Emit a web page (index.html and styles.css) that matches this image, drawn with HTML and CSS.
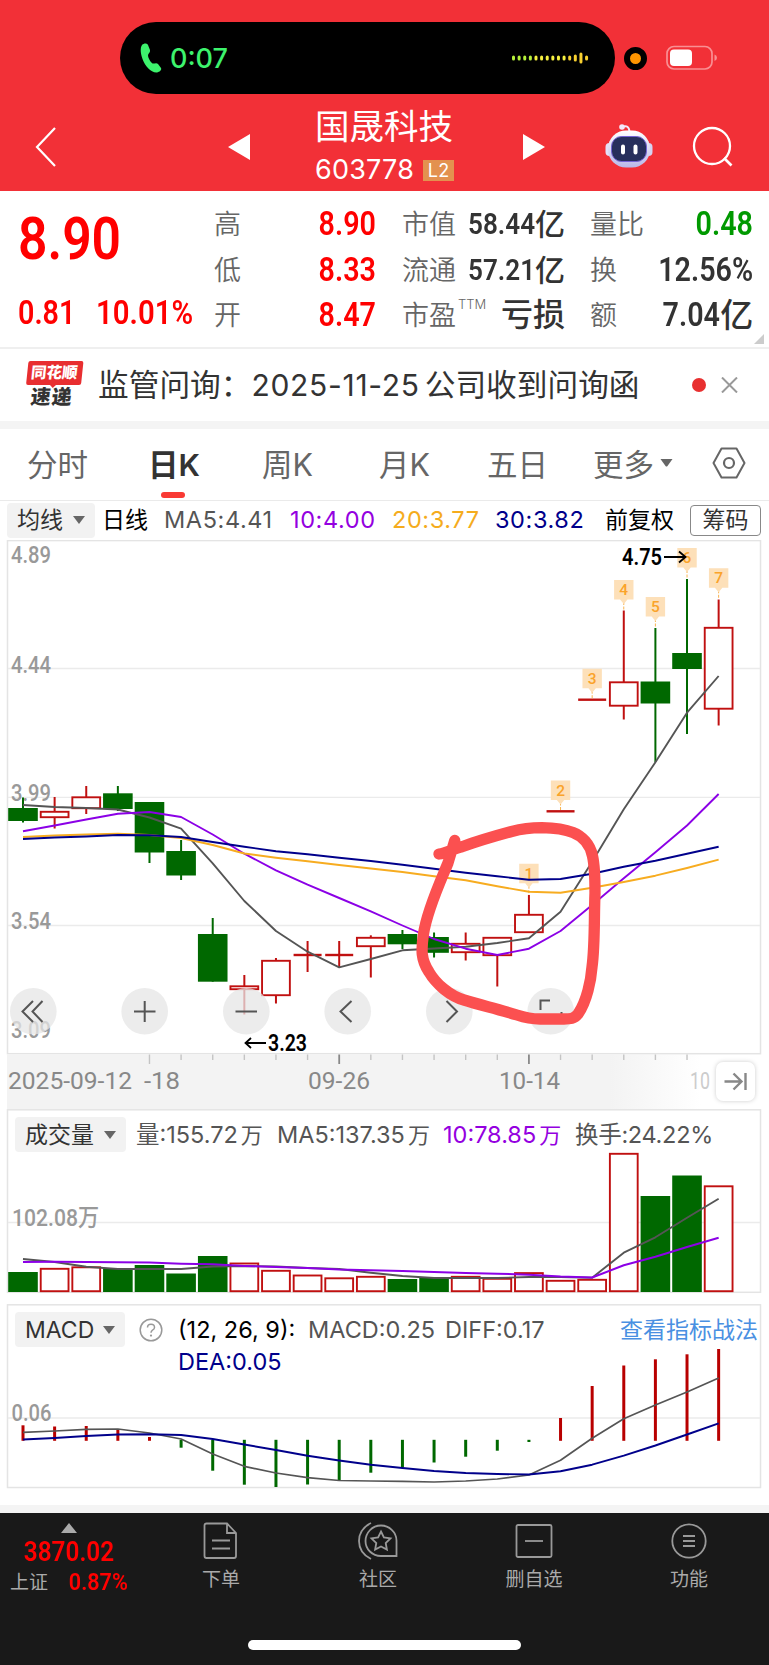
FILE: index.html
```html
<!DOCTYPE html>
<html lang="zh-CN">
<head>
    <meta charset="UTF-8">
    <meta name="viewport" content="width=device-width, initial-scale=1.0">
    <title>国晟科技 603778</title>
    <link rel="stylesheet" href="styles.css">
</head>
<body>
    <header class="top">
        <div class="status">
            <div class="island">
                <svg class="phone" width="22" height="30" viewBox="0 0 22 30"><path d="M2 2C4 0 7 0 8 2L10 7C10.500 9 8.500 10.500 8 12C8 15 10.500 19 12.500 20.500C14 21 16.500 19.500 18 21L21 25C22 27 19.500 29 17 29.500C11 30 5 23 2.500 16C0.500 10 0 5 2 2Z" fill="#3df36d"/></svg>
                <span class="call-time">0:07</span>
                <svg class="wave" width="77" height="16" viewBox="0 0 77 16" id="wave"></svg>
            </div>
            <div class="mic"></div>
            <svg class="battery" width="52" height="26" viewBox="0 0 52 26">
                <rect x="1" y="1.500" width="45" height="22.500" rx="7" fill="none" stroke="#f98f93" stroke-width="1.700"/>
                <rect x="4" y="4.500" width="22" height="16.500" rx="4" fill="#fff"/>
                <path d="M48.500 9.500Q51 10.500 51 12.800T48.500 16Z" fill="#f98f93"/>
            </svg>
        </div>
        <nav class="titlebar">
            <svg class="back" width="22" height="40" viewBox="0 0 22 40"><path d="M20 1L2 20L20 39" fill="none" stroke="#fff" stroke-width="2.200"/></svg>
            <svg class="prev" width="22" height="26" viewBox="0 0 22 26"><path d="M22 0V26L0 13Z" fill="#fff"/></svg>
            <div class="stock">
                <div class="name">国晟科技</div>
                <div class="code"><span>603778</span><b>L2</b></div>
            </div>
            <svg class="next" width="22" height="26" viewBox="0 0 22 26"><path d="M0 0V26L22 13Z" fill="#fff"/></svg>
            <svg class="robot" width="48" height="44" viewBox="0 0 48 44">
                <defs>
                    <linearGradient id="shell" x1="0" y1="0" x2="0" y2="1"><stop offset="0" stop-color="#fff"/><stop offset="1" stop-color="#b9b8e8"/></linearGradient>
                </defs>
                <path d="M17 3Q24 0 24.500 8" fill="none" stroke="#f3e9fb" stroke-width="2"/>
                <circle cx="17" cy="3" r="2.800" fill="#f3e9fb"/>
                <rect x="0.500" y="19" width="8" height="13" rx="4" fill="#e4e0f8"/>
                <rect x="39.500" y="19" width="8" height="13" rx="4" fill="#d5d2f2"/>
                <rect x="3" y="6.500" width="42" height="37" rx="18" fill="url(#shell)"/>
                <rect x="6.500" y="12.500" width="35" height="25" rx="10" fill="#272f5c" stroke="#7262d5" stroke-width="1"/>
                <path d="M18 22.500V28.500M30.500 22.500V28.500" stroke="#fff" stroke-width="4" stroke-linecap="round"/>
            </svg>
            <svg class="search" width="42" height="42" viewBox="0 0 42 42"><circle cx="20" cy="20" r="18" fill="none" stroke="#fff" stroke-width="2.300"/><path d="M32 32L39.500 39.500" stroke="#fff" stroke-width="2.600"/></svg>
        </nav>
    </header>

    <section class="quote">
        <div class="price">
            <div class="last"><span class="din">8.90</span></div>
            <div class="change"><span class="din">0.81</span><span class="din">10.01%</span></div>
        </div>
        <dl class="c1">
            <dt>高</dt><dd class="red"><span class="din">8.90</span></dd>
            <dt>低</dt><dd class="red"><span class="din">8.33</span></dd>
            <dt>开</dt><dd class="red"><span class="din">8.47</span></dd>
        </dl>
        <dl class="c2">
            <dt>市值</dt><dd class="small"><span class="din">58.44</span>亿</dd>
            <dt>流通</dt><dd class="small"><span class="din">57.21</span>亿</dd>
            <dt>市盈<sup>TTM</sup></dt><dd class="loss">亏损</dd>
        </dl>
        <dl class="c3">
            <dt>量比</dt><dd class="green"><span class="din">0.48</span></dd>
            <dt>换</dt><dd><span class="din">12.56%</span></dd>
            <dt>额</dt><dd><span class="din">7.04</span>亿</dd>
        </dl>
        <i class="corner"></i>
    </section>

    <section class="notice">
        <div class="logo"><span class="logo-top">同花顺</span><span class="logo-bottom">速递</span></div>
        <p>监管问询：<span class="date">2025-11-25</span>公司收到问询函</p>
        <i class="dot"></i>
        <svg width="17" height="16" viewBox="0 0 17 16"><path d="M1 0.500L16 15.500M16 0.500L1 15.500" stroke="#999" stroke-width="2"/></svg>
    </section>

    <nav class="tabs">
        <a class="t1">分时</a><a class="t2 active">日K</a><a class="t3">周K</a><a class="t4">月K</a><a class="t5">五日</a>
        <a class="more">更多<svg width="13" height="8" viewBox="0 0 13 8"><path d="M0.500 0H12.500L7.500 7Q6.500 8 5.500 7Z" fill="#666"/></svg></a>
        <svg class="setting" width="34" height="32" viewBox="0 0 34 32"><path d="M9.500 1.500H24.500L32.500 16L24.500 30.500H9.500L1.500 16Z" fill="none" stroke="#666" stroke-width="2" stroke-linejoin="round"/><circle cx="17" cy="16" r="5" fill="none" stroke="#666" stroke-width="2.200"/></svg>
    </nav>

    <div class="legend ma">
        <button class="pick">均线<i></i></button>
        <span class="day">日线</span>
        <span class="ma5">MA5:4.41</span>
        <span class="ma10">10:4.00</span>
        <span class="ma20">20:3.77</span>
        <span class="ma30">30:3.82</span>
        <span class="fq">前复权</span>
        <button class="chip">筹码</button>
    </div>

    <main class="charts">
        <div class="axis-bg"></div>
        <div class="legend vol">
            <button class="pick">成交量<i></i></button>
            <span class="v1">量:155.72<em>万</em></span>
            <span class="v2">MA5:137.35<em>万</em></span>
            <span class="v3">10:78.85<em>万</em></span>
            <span class="v4">换手:24.22%</span>
        </div>
        <div class="legend macd">
            <button class="pick">MACD<i></i></button>
            <svg class="help" width="24" height="24" viewBox="0 0 24 24"><circle cx="12" cy="12" r="10.800" fill="none" stroke="#999" stroke-width="1.500"/><path d="M8.500 9.500Q8.500 6.300 12 6.300T15.500 9.400Q15.500 11 13.500 12.200Q12 13.200 12 14.800" fill="none" stroke="#999" stroke-width="1.500"/><circle cx="12" cy="17.600" r="1.100" fill="#999"/></svg>
            <span class="m1">(12, 26, 9):</span>
            <span class="m2">MACD:0.25</span>
            <span class="m3">DIFF:0.17</span>
            <a class="tips">查看指标战法</a>
            <span class="dea">DEA:0.05</span>
        </div>
        <svg id="chart" width="769" height="964" viewBox="0 540 769 964"></svg>
    </main>

    <footer class="bottom">
        <div class="index">
            <i></i>
            <strong class="din">3870.02</strong>
            <div><span>上证</span><b class="din">0.87%</b></div>
        </div>
        <div class="item i1">
            <svg width="36" height="38" viewBox="0 0 36 38"><path d="M3.500 1.500H24L33 11V34Q33 36 31 36H3.500Q1.500 36 1.500 34V3.500Q1.500 1.500 3.500 1.500ZM24 1.500V11H33M9 18.500H27M9 26.500H27"/></svg>
            <span>下单</span>
        </div>
        <div class="item i2">
            <svg width="40" height="38" viewBox="0 0 40 38"><path d="M13 1Q1 7 1 19T13 37M23 3.500C31 3.500 38.500 10 38.500 18.500V34H23C14 34 7.500 27 7.500 19S14 3.500 23 3.500Z"/><path d="M23 9.500L25.900 15.500L32.500 16.400L27.700 21L28.900 27.600L23 24.500L17.100 27.600L18.300 21L13.500 16.400L20.100 15.500Z"/></svg>
            <span>社区</span>
        </div>
        <div class="item i3">
            <svg width="38" height="38" viewBox="0 0 38 38"><rect x="1.500" y="3" width="35" height="32" rx="1.500"/><path d="M10 19H28"/></svg>
            <span>删自选</span>
        </div>
        <div class="item i4">
            <svg width="38" height="38" viewBox="0 0 38 38"><circle cx="19" cy="19" r="16.700"/><path d="M13 14H25M13 19H25M13 24H25"/></svg>
            <span>功能</span>
        </div>
        <div class="home"></div>
    </footer>
    <script src="chart.js"></script>
</body>
</html>
```
FILE: styles.css
```css
* {
    box-sizing: border-box;
}
body {
    margin: 0;
    width: 769px;
    height: 1665px;
    background: #fff;
    color: #333;
    font-family: Inter, "Noto Sans CJK SC", sans-serif;
    white-space: nowrap;
    overflow: hidden;
}
svg {
    display: block;
    flex: none;
}
button {
    border: none;
    margin: 0;
    padding: 0;
    font: inherit;
    color: #333;
}
p, dl, dd {
    margin: 0;
}
.din {
    display: inline-block;
    font-family: Roboto, sans-serif;
    font-weight: 600;
    transform: scaleX(0.87);
    transform-origin: right center;
}
/* header */
.top {
    height: 191px;
    background: #f23037;
    color: #fff;
}
.status {
    display: flex;
    padding: 22px 0 0 120px;
    height: 94px;
}
.island {
    width: 495px;
    height: 72px;
    border-radius: 36px;
    background: #000;
    display: flex;
    align-items: center;
    padding: 0 26px 0 20px;
}
.call-time {
    margin-left: 8px;
    font-size: 27px;
    font-weight: 500;
    color: #3df36d;
}
.wave {
    margin-left: auto;
}
.mic {
    width: 23px;
    height: 23px;
    border-radius: 50%;
    background: #ff9500;
    border: 6px solid #000;
    margin: 25px 0 0 9px;
}
.battery {
    margin: 23px 0 0 19px;
}
.titlebar {
    display: flex;
    align-items: center;
    height: 97px;
    padding-left: 35px;
}
.prev {
    margin-left: 171px;
    margin-top: 9px;
}
.back {
    margin-top: 9px;
}
.stock {
    margin-left: 65px;
    width: 142px;
}
.name {
    font-size: 34.500px;
    line-height: 42px;
    margin-top: 7px;
}
.code {
    display: flex;
    align-items: center;
    font-size: 27px;
    letter-spacing: 0.200px;
    line-height: 32px;
    margin-top: 6px;
}
.code b {
    width: 31px;
    height: 21px;
    margin-left: 9px;
    background: #e3914f;
    font-size: 18px;
    font-weight: 400;
    line-height: 21px;
    text-align: center;
}
.next {
    margin: 9px 0 0 66px;
}
.robot {
    margin: 7px 0 0 60px;
}
.search {
    margin: 9px 0 0 39px;
}
/* quote */
.quote {
    position: relative;
    display: flex;
    height: 158px;
    border-bottom: 2px solid #efefef;
    padding-top: 10px;
}
.price {
    width: 214px;
    padding-left: 18px;
    color: #f00;
}
.price .din {
    transform-origin: left center;
}
.last {
    font-size: 60px;
    line-height: 72px;
    height: 88px;
}
.last .din {
    transform: scaleX(0.86);
}
.change {
    display: flex;
    font-size: 33px;
    line-height: 48px;
}
.change span + span {
    margin-left: 12px;
    transform: scaleX(0.89);
}
.quote dl {
    display: grid;
    grid-template-columns: 54px 1fr;
    grid-auto-rows: 45.500px;
    font-size: 27px;
    line-height: 48px;
}
.quote dt {
    color: #666;
    font-weight: 350;
}
.quote dd {
    font-size: 33px;
    line-height: 46px;
    height: 46px;
    font-weight: 500;
    display: flex;
    justify-content: flex-end;
    align-items: center;
}
.quote dd.small {
    font-size: 30px;
}
.quote dd.loss {
    font-size: 32px;
}
.quote sup {
    font-size: 13px;
    line-height: 1;
    vertical-align: 16px;
    margin-left: 2px;
    display: inline-block;
}
.c1 { width: 162px; }
.c2 { width: 163px; margin-left: 26px; }
.c3 { width: 163px; margin-left: 25px; }
.quote .red { color: #f00; }
.quote .green { color: #090; }
.corner {
    position: absolute;
    right: 5px;
    bottom: 3px;
    border-left: 10px solid transparent;
    border-bottom: 10px solid #ccc;
}
/* notice */
.notice {
    display: flex;
    align-items: center;
    height: 80px;
    border-bottom: 8px solid #f4f4f4;
    padding-left: 24px;
}
.logo {
    width: 58px;
    height: 48px;
    display: flex;
    flex-direction: column;
    align-items: center;
    font-weight: 900;
    transform: skewX(-6deg);
}
.logo-top {
    position: relative;
    width: 55px;
    height: 24px;
    border-radius: 2px;
    background: #e82e30;
    color: #fff;
    font-size: 15.500px;
    line-height: 24px;
    text-align: center;
}
.logo-top::after {
    content: "";
    position: absolute;
    left: 23px;
    top: 23px;
    border: 4px solid transparent;
    border-top-color: #e82e30;
    border-bottom: 0;
}
.logo-bottom {
    font-size: 20px;
    line-height: 25px;
    letter-spacing: 1px;
}
.notice p {
    width: 600px;
    margin-left: 16px;
    font-size: 30.700px;
    line-height: 40px;
}
.date {
    font-size: 30px;
    letter-spacing: 0.700px;
    margin-right: 5px;
}
.notice .dot {
    width: 14px;
    height: 14px;
    border-radius: 50%;
    background: #e83030;
    margin: 0 15px 0 -6px;
}
/* tabs */
.tabs {
    display: flex;
    align-items: center;
    height: 72px;
    padding: 0 0 3px 27px;
    border-bottom: 1px solid #eaeaea;
    font-size: 30.500px;
    color: #666;
}
.tabs a {
    position: relative;
}
.tabs .t1 { width: 121px; }
.tabs .t2 { width: 114px; }
.tabs .t3 { width: 117px; }
.tabs .t4 { width: 108px; }
.tabs .t5 { width: 106px; }
.tabs .active {
    color: #333;
    font-weight: 600;
}
.tabs .active::after {
    content: "";
    position: absolute;
    left: 13px;
    top: 51px;
    width: 24px;
    height: 6px;
    border-radius: 3px;
    background: #f93a34;
}
.tabs .more {
    display: flex;
    align-items: center;
    gap: 6px;
    width: 119px;
}
/* legends */
.legend {
    display: flex;
    align-items: center;
    font-size: 23.500px;
    line-height: 30px;
    color: #555;
}
.legend em {
    font-style: normal;
    font-size: 22px;
    margin-left: 3px;
}
.pick {
    display: flex;
    align-items: center;
    justify-content: space-between;
    flex: none;
    height: 35px;
    padding: 0 10px;
    border-radius: 4px;
    background: #f2f2f2;
    font-size: 23px;
}
.pick i {
    border: 6px solid transparent;
    border-top: 8px solid #666;
    border-bottom: 0;
}
.ma {
    height: 40px;
    padding: 0 0 2px 7px;
    letter-spacing: 0.600px;
}
.ma .pick { width: 88px; letter-spacing: 0; }
.day { width: 62px; margin-left: 7px; color: #000; font-size: 23px; letter-spacing: 0; }
.ma5 { width: 126px; }
.ma10 { width: 102px; color: #9400e0; }
.ma20 { width: 103px; color: #f5ac1d; }
.ma30 { width: 110px; color: #00008b; }
.fq { width: 85px; color: #000; font-size: 23px; letter-spacing: 0; }
.chip {
    width: 71px;
    height: 31px;
    border: 1.500px solid #888;
    border-radius: 4px;
    background: #fff;
    font-size: 23px;
    letter-spacing: 0;
    line-height: 27px;
}
/* charts */
.charts {
    position: relative;
    height: 972px;
    border-bottom: 8px solid #f4f4f4;
}
.axis-bg {
    position: absolute;
    left: 7px;
    top: 514px;
    width: 754px;
    height: 55px;
    background: linear-gradient(90deg, #f3f3f3 0, #f3f3f3 80%, #fff 92%);
}
.vol {
    position: absolute;
    left: 15px;
    top: 576px;
}
.vol .pick { width: 111px; }
.v1 { width: 141px; margin-left: 10px; }
.v2 { width: 166px; }
.v3 { width: 132px; color: #9400e0; }
.v4 { letter-spacing: -0.300px; }
.macd {
    position: absolute;
    left: 15px;
    top: 771px;
}
.macd .pick { width: 110px; }
.help { margin: 0 15px 0 14px; }
.m1 { width: 130px; color: #000; }
.m2 { width: 137px; }
.m3 { width: 175px; }
.tips { color: #4a90e2; font-size: 23px; }
.dea {
    position: absolute;
    left: 163px;
    top: 35px;
    color: #00008b;
}
#chart {
    position: absolute;
    left: 0;
    top: -1px;
}
#chart text {
    font-family: Roboto, "Noto Sans CJK SC", sans-serif;
}
/* bottom bar */
.bottom {
    position: relative;
    display: flex;
    height: 153px;
    background: #191919;
    color: #aaa;
    font-size: 19px;
}
.index {
    width: 138px;
    display: flex;
    flex-direction: column;
    align-items: center;
    color: #f00;
}
.index i {
    border: 8.500px solid transparent;
    border-bottom: 10px solid #aaa;
    border-top: 0;
    margin-top: 10px;
}
.index strong {
    font-size: 28px;
    line-height: 34px;
    margin-top: 2px;
    transform-origin: center;
}
.index div {
    display: flex;
    align-items: center;
    width: 128px;
    justify-content: space-between;
    align-self: flex-start;
    padding-left: 10px;
    color: #aaa;
    line-height: 28px;
}
.index b {
    font-size: 23px;
    color: #f00;
    transform: scaleX(0.94);
}
.item {
    width: 80px;
    display: flex;
    flex-direction: column;
    align-items: center;
    padding-top: 9px;
}
.item svg {
    fill: none;
    stroke: #999;
    stroke-width: 1.800;
}
.item span {
    margin-top: 6px;
    line-height: 28px;
}
.i1 { margin-left: 43px; }
.i2 { margin-left: 77px; }
.i3 { margin-left: 76px; }
.i4 { margin-left: 75px; }
.home {
    position: absolute;
    left: 248px;
    top: 127px;
    width: 273px;
    height: 10px;
    border-radius: 5px;
    background: #fff;
}
```
FILE: chart.js
```js
const svg = document.getElementById('chart');
const RED = '#c01010', GREEN = '#006800';
const W = 29.6;
let out = '';

// x centre of the n-th trading day
const cx = n => 23 + n * 31.62;

function line(x1, y1, x2, y2, color, w, extra = '') {
    out += `<line x1="${x1}" y1="${y1}" x2="${x2}" y2="${y2}" stroke="${color}" stroke-width="${w}" ${extra}/>`;
}
function bar(n, top, bottom, up) {
    const x = cx(n) - W / 2;
    if (up) {
        out += `<rect x="${x + 0.9}" y="${top + 0.8}" width="${W - 1.8}" height="${bottom - top - 1.6}" fill="#fff" stroke="${RED}" stroke-width="1.9"/>`;
    } else {
        out += `<rect x="${x}" y="${top}" width="${W}" height="${bottom - top}" fill="${GREEN}"/>`;
    }
}
function curve(ys, color, w = 1.9) {
    const pts = ys.map((y, n) => `${cx(n)},${y}`).join(' ');
    out += `<polyline points="${pts}" fill="none" stroke="${color}" stroke-width="${w}" stroke-linejoin="round"/>`;
}
function text(x, y, str, len, color = '#999', size = 24, weight = 500) {
    out += `<text x="${x}" y="${y}" fill="${color}" font-size="${size}" font-weight="${weight}" textLength="${len}" lengthAdjust="spacingAndGlyphs">${str}</text>`;
}
function frame(top, bottom) {
    out += `<rect x="7.5" y="${top}" width="753" height="${bottom - top}" fill="none" stroke="#e4e4e4" stroke-width="1.5"/>`;
}

frame(540.6, 1053.7);
[668.5, 797.3, 925.5].forEach(y => line(8, y, 760, y, '#ebebeb', 1.3));
frame(1109.8, 1292.3);
line(8, 1222.5, 760, 1222.5, '#ebebeb', 1.3);
frame(1304.8, 1487.5);
line(8, 1418, 760, 1418, '#ebebeb', 1.3);

text(11, 563, '4.89', 40);
text(11, 673, '4.44', 40);
text(11, 800.5, '3.99', 40);
text(11, 929, '3.54', 40);
text(11, 1038, '3.09', 40);
text(12, 1226, '102.08万', 87, '#999', 23.5);
text(11.5, 1421, '0.06', 40);

// [up, high, top, bottom, low]
const candles = [
    [0, 797.5, 808, 821, 822.5], [1, 797, 811, 818, 828.5], [1, 786, 796.5, 809, 814],
    [0, 786, 793.3, 809, 811], [0, 802, 802, 852.5, 863], [0, 840, 851, 875.5, 880],
    [0, 918, 934, 981.7, 981.7], [1, 975, 985.5, 990, 1014.5], [1, 958, 960, 996, 1003.5],
    [1, 941, 955, 955, 972], [1, 941, 955, 955, 967], [1, 935.3, 937, 947, 977.5],
    [0, 930, 934, 944.3, 949], [0, 932.5, 937, 952.8, 957.5], [1, 932.5, 943, 953, 960.5],
    [1, 937, 937, 956, 986.5], [1, 895, 914, 933, 933], [1, 811.3, 811.3, 811.3, 811.3],
    [1, 699.7, 699.7, 699.7, 699.7], [1, 610.5, 681.5, 706.5, 719.5], [0, 628, 681.5, 703.5, 762],
    [0, 579, 653, 669, 734], [1, 599.5, 627, 709.5, 725.5]
];
candles.forEach(([up, high, top, bottom, low], n) => {
    const color = up ? RED : GREEN;
    line(cx(n), high, cx(n), low, color, 2);
    if (top === bottom) {
        line(cx(n) - 14, top, cx(n) + 14, top, RED, 2.4);
    } else {
        bar(n, top, bottom, up);
    }
});

// signal tags over the last seven candles
[[16, 863.7, 895], [17, 780.5, 811], [18, 668.7, 699], [19, 580, 610], [20, 597, 628], [21, 548, 579], [22, 568.3, 599]].forEach(([n, y, end], k) => {
    const x = cx(n);
    line(x, y + 22, x, end, '#f9b350', 1, 'stroke-dasharray="3 1.5"');
    out += `<path d="M${x - 9.7} ${y}h19.4v19.500h-6l-3.700 4.500l-3.700 -4.500h-6z" fill="#fde0b9"/>`;
    out += `<text x="${x}" y="${y + 15}" font-size="15.500" font-weight="500" fill="#faa32a" text-anchor="middle">${k + 1}</text>`;
});

curve([805, 807, 808, 809.5, 817.5, 828.7, 863.3, 901, 931, 951.7, 967.3, 959, 950.3, 948.5, 946.7, 943, 938.3, 911.7, 861.7, 809.3, 762.3, 712.7, 676], '#555');
curve([831.3, 825.5, 819.5, 813.7, 812, 817, 834.5, 853.7, 870.3, 884.7, 898, 911.3, 925.5, 939, 948.7, 955, 948.7, 931, 905, 878.3, 852.3, 825.5, 794], '#8b00e6');
curve([837, 835.5, 834.5, 833.7, 835, 838, 845, 853.5, 857.7, 861.3, 865, 868.5, 872, 876.3, 880.3, 886.3, 891.7, 892.7, 887.7, 882, 875.7, 868, 859.7], '#f7ac20');
curve([839, 837.5, 836.5, 835, 835.3, 837, 842, 846.7, 851.3, 854.3, 857.7, 861, 864.7, 868.7, 872.7, 876.3, 879.7, 879, 873.7, 866.7, 860.7, 853.7, 846.7], '#00008b');

text(622, 565, '4.75', 40, '#000', 24, 600);
out += '<path d="M664 557H685M679 551.500L685.500 557L679 562.500" fill="none" stroke="#000" stroke-width="1.800"/>';
text(268, 1051, '3.23', 39, '#000', 24, 600);
out += '<path d="M266 1043H246M251 1038L245.500 1043L251 1048" fill="none" stroke="#000" stroke-width="1.800"/>';

// round tool buttons
const icons = [
    'M33 1001L22.500 1011.500L33 1022M42.500 1001L32.500 1011.500L42.500 1022',
    'M134 1011.500H155.500M144.700 1001V1022',
    'M235.500 1011.500H257',
    'M351.500 1001L340.500 1011.500L351.500 1022',
    'M446.500 1001L457 1011.500L446.500 1022',
    'M540.500 1010V1000.500H550M561.500 1012V1022H552'
];
[33.3, 144.7, 246.3, 347.7, 449.3, 550.7].forEach((x, k) => {
    out += `<circle cx="${x}" cy="1011.300" r="23.300" fill="#e6e6e6" fill-opacity="0.75"/>`;
    out += `<path d="${icons[k]}" fill="none" stroke="#555" stroke-width="2"/>`;
});

// date axis
for (let n = 4; n < 22; n++) {
    const major = n === 10 || n === 16;
    line(cx(n), 1054.5, cx(n), n === 4 || major ? 1064 : 1060, major ? '#888' : '#c4c4c4', major ? 1.8 : 1.4);
}
text(8, 1089, '2025-09-12', 124, '#888', 24, 450);
text(144, 1089, '-18', 36, '#888', 24, 450);
text(308, 1089, '09-26', 62, '#888', 24, 450);
text(499, 1089, '10-14', 61, '#888', 24, 450);
text(690, 1089, '10', 20, '#ccc', 24, 450);
out += '<rect x="716" y="1062" width="39" height="39" rx="7" fill="#fff" style="filter:drop-shadow(0 0 2px #ccc)"/>';
out += '<path d="M724.500 1081.500H741M733.500 1073.500L741.500 1081.500L733.500 1089.500M745.500 1073V1090" fill="none" stroke="#888" stroke-width="2.400"/>';

// volume
const vol = [1272, 1268, 1266.5, 1269, 1265, 1273.5, 1256, 1262.7, 1270, 1274.7, 1277.5, 1276, 1279, 1278, 1276, 1278, 1272.3, 1280, 1279, 1153, 1196, 1175.5, 1185.5];
vol.forEach((y, n) => bar(n, y, 1292, candles[n][0]));
curve([1259, 1262, 1266.7, 1269, 1269, 1269, 1266.5, 1266, 1266.5, 1268, 1269, 1272.7, 1276, 1278, 1278, 1278, 1277, 1277, 1277.7, 1252.7, 1237.3, 1217.7, 1198.7], '#555');
curve([1262, 1261.7, 1262, 1262.3, 1262.5, 1263.7, 1264.3, 1266, 1267, 1268, 1269.5, 1270.3, 1271, 1272, 1273, 1273.7, 1274.7, 1276.5, 1277.5, 1265.3, 1256.7, 1247, 1237.7], '#8b00e6', 2);

// macd
const hist = [1425.3, 1426.5, 1426, 1429, 1437, 1447.7, 1470.7, 1484.7, 1487, 1484.5, 1480, 1472.7, 1467.5, 1462.5, 1456.7, 1450.7, 1442, 1418, 1386, 1365.5, 1359.3, 1354.3, 1349];
hist.forEach((y, n) => line(cx(n), y < 1440 ? 1440.8 : 1439.8, cx(n), y, y < 1440 ? '#b80000' : GREEN, 3));
curve([1432.3, 1431, 1429.3, 1429, 1433, 1439, 1454, 1466.3, 1473, 1477.7, 1480.5, 1481, 1481.3, 1482, 1481, 1479, 1475, 1460.3, 1438.3, 1418.7, 1405, 1392, 1378], '#555', 1.7);
curve([1439.5, 1438, 1436, 1434.5, 1434.3, 1435, 1439, 1444.5, 1450, 1455.7, 1460.5, 1464.7, 1468, 1471, 1473, 1474, 1474.5, 1471.3, 1464.7, 1455.7, 1445.5, 1434.5, 1423.3], '#00008b', 1.9);

// hand-drawn marker
out += '<path d="M439 854C446 853 453 849 462 846.700C478 841 495 836 511.700 831.500C521 829 531 827.700 541.700 827.700C553 828 564 829 573 832.500C582 836 590 844 592.500 856C595 867 595 880 595 893C594 917 595 945 592 967C591 980 587 1001 578 1014C574 1019 570 1019 564 1019H540C530 1019 523 1017 517 1015C498 1009 480 1005 464 1000C450 996 436 984 429 972C421 960 421 950 423.500 934C427 910 441 880 448 863L454.700 840.500" fill="none" stroke="#fb5050" stroke-width="11.300" stroke-linecap="round" stroke-linejoin="round"/>';

svg.innerHTML = out;

// call level meter
let dots = '';
for (let n = 0; n < 14; n++) {
    const h = n === 12 ? 11 : n === 11 ? 7 : 5;
    const color = n < 4 ? '#b6f03a' : n < 10 ? '#f6f040' : '#f8d030';
    dots += `<rect x="${n * 5.62}" y="${8 - h / 2}" width="3" height="${h}" rx="1.5" fill="${color}"/>`;
}
document.getElementById('wave').innerHTML = dots;
```
